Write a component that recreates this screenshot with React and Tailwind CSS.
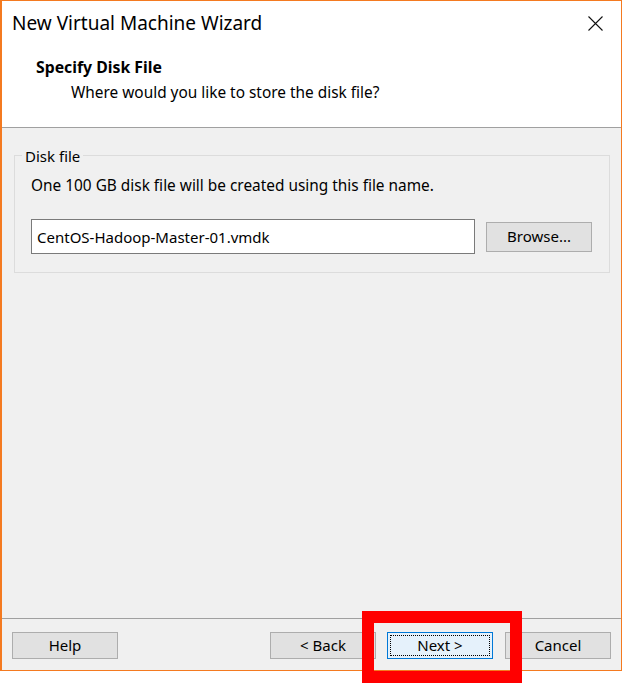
import React from "react";

const font = { fontFamily: '"Noto Sans", "Open Sans", sans-serif' };

const WinButton = ({ children, className = "", focused = false }) => (
  <div
    className={
      "relative flex h-[27px] w-[106px] items-center justify-center border text-[15px] text-black " +
      (focused
        ? "border-[#0078d7] bg-[#e5f1fb] "
        : "border-[#adadad] bg-[#e1e1e1] ") +
      className
    }
  >
    {focused && (
      <div className="absolute inset-[2px] border border-dotted border-black" />
    )}
    <span className="relative leading-none">{children}</span>
  </div>
);

export default function App() {
  return (
    <div className="relative h-[683px] w-[624px] bg-white" style={font}>
      <div className="flex h-[671px] w-[622px] flex-col border border-l-2 border-[#f47a20] bg-[#f0f0f0]">
        {/* title + header */}
        <div className="h-[127px] border-b border-[#a0a0a0] bg-white">
          <div className="flex h-[44px] items-center justify-between pl-[10px] pr-[18px]">
            <span className="text-[19px] leading-none text-black">
              New Virtual Machine Wizard
            </span>
            <svg width="15" height="15" viewBox="0 0 15 15">
              <path d="M0.5 0.5 L14.5 14.5 M14.5 0.5 L0.5 14.5" stroke="#111" strokeWidth="1.1" />
            </svg>
          </div>
          <div className="pl-[34px] pt-[15px] text-[15.8px] leading-none font-bold text-black">
            Specify Disk File
          </div>
          <div className="pl-[69px] pt-[9px] text-[15.4px] leading-none text-black">
            Where would you like to store the disk file?
          </div>
        </div>

        {/* content */}
        <div className="flex-1 px-[12px] pt-[27px]">
          <div className="relative h-[118px] w-[596px] border border-[#dcdcdc] px-[16px] pt-[22px]">
            <span className="absolute -top-[10px] left-[7px] bg-[#f0f0f0] px-[3px] text-[15px] leading-[20px] text-black">
              Disk file
            </span>
            <div className="text-[15.4px] leading-none text-black">
              One 100 GB disk file will be created using this file name.
            </div>
            <div className="mt-[26px] flex items-center gap-[11px]">
              <div className="flex h-[35px] w-[444px] items-center border border-[#7a7a7a] bg-white pl-[5px] text-[15px] text-black">
                CentOS-Hadoop-Master-01.vmdk
              </div>
              <WinButton className="h-[30px]">Browse...</WinButton>
            </div>
          </div>
        </div>

        {/* footer */}
        <div className="h-[52px] border-t border-[#a0a0a0] px-[10px] pt-[13px]">
          <div className="flex items-center">
            <WinButton>Help</WinButton>
            <div className="flex-1" />
            <WinButton>&lt; Back</WinButton>
            <WinButton focused className="ml-[11px]">
              Next &gt;
            </WinButton>
            <WinButton className="ml-[12px]">Cancel</WinButton>
          </div>
        </div>
      </div>

      {/* highlight annotation */}
      <div className="absolute left-[362px] top-[611px] h-[72px] w-[160px] border-[12px] border-[#ff0000]" />
    </div>
  );
}
